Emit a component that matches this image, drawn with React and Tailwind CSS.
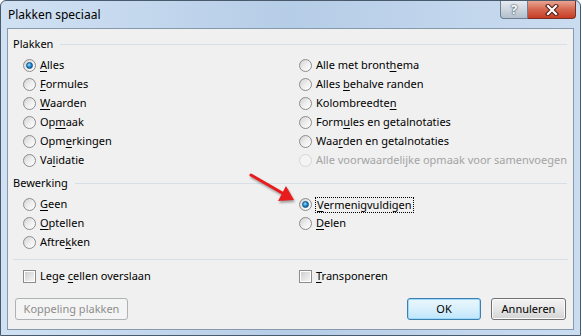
import React from 'react';

const font = { fontFamily: '"Noto Sans", "Liberation Sans", sans-serif' };

const Label = ({ parts, disabled }) => {
  // parts: [before, key, after]
  const [a, k, b] = parts;
  return (
    <span className={disabled ? 'whitespace-nowrap text-[#a3a3a3]' : 'whitespace-nowrap text-black'}>
      {a}
      {k && !disabled ? <span className="underline decoration-1 underline-offset-[2px]">{k}</span> : k}
      {b}
    </span>
  );
};

const Radio = ({ checked, disabled }) => (
  <span
    className={
      disabled
        ? 'flex h-[13px] w-[13px] shrink-0 items-center justify-center rounded-full border border-[#d6d6d6] bg-[#f4f4f4]'
        : 'flex h-[13px] w-[13px] shrink-0 items-center justify-center rounded-full border border-[#8c8c8c] bg-gradient-to-br from-[#d2d2d2] via-[#eeeeee] to-[#ffffff]'
    }
  >
    {checked && (
      <span className="h-[7px] w-[7px] rounded-full border border-[#0b4f86] bg-[radial-gradient(circle_at_40%_35%,#9be0ff,#2a8fd0_45%,#0b5a98_90%)]" />
    )}
  </span>
);

const Check = () => (
  <span className="flex h-[13px] w-[13px] shrink-0 items-center justify-center border border-[#8c8c8c] bg-white">
    <span className="h-[9px] w-[9px] bg-gradient-to-br from-[#cfcfcf] to-[#f6f6f6]" />
  </span>
);

const Option = ({ parts, checked, disabled, focus }) => (
  <div className="flex h-[19px] items-center gap-[4px]">
    <Radio checked={checked} disabled={disabled} />
    {focus ? (
      <span className="-ml-px border border-dotted border-black px-px leading-[14px]">
        <Label parts={parts} />
      </span>
    ) : (
      <Label parts={parts} disabled={disabled} />
    )}
  </div>
);

const GroupTitle = ({ children }) => (
  <div className="flex h-[19px] items-center gap-[7px] pl-[5px] pr-[6px]">
    <span className="text-black">{children}</span>
    <div className="h-px flex-1 bg-[#d5dfe5]" />
  </div>
);

const pasteLeft = [
  { parts: ['', 'A', 'lles'], checked: true },
  { parts: ['', 'F', 'ormules'] },
  { parts: ['', 'W', 'aarden'] },
  { parts: ['Op', 'm', 'aak'] },
  { parts: ['Opm', 'e', 'rkingen'] },
  { parts: ['Va', 'l', 'idatie'] },
];

const pasteRight = [
  { parts: ['Alle met bront', 'h', 'ema'] },
  { parts: ['Alles ', 'b', 'ehalve randen'] },
  { parts: ['Kolombreedte', 'n', ''] },
  { parts: ['Form', 'u', 'les en getalnotaties'] },
  { parts: ['Waa', 'r', 'den en getalnotaties'] },
  { parts: ['Alle voorwaardelijke opmaak voor samenvoegen', '', ''], disabled: true },
];

const opLeft = [
  { parts: ['', 'G', 'een'] },
  { parts: ['', 'O', 'ptellen'] },
  { parts: ['Aftre', 'k', 'ken'] },
];

const opRight = [
  { parts: ['', 'V', 'ermenigvuldigen'], checked: true, focus: true },
  { parts: ['', 'D', 'elen'] },
];

export default function App() {
  return (
    <div className="relative h-[336px] w-[582px] bg-white text-[11px]" style={font}>
      <div className="flex h-[336px] w-[581px] flex-col rounded-t-[6px] border border-[#4a5a6d] bg-gradient-to-r from-[#d0e1f3] via-[#b6cde7] to-[#cadcf0]">
        {/* title bar */}
        <div className="flex h-[27px] items-start justify-between">
          <span className="pl-[7px] pt-[6px] text-[12px] leading-[16px] text-black">Plakken speciaal</span>
          <div className="mr-[4px] flex">
            <div className="flex h-[18px] w-[28px] items-center justify-center rounded-bl-[4px] border border-t-0 border-[#6e7f92] bg-gradient-to-b from-[#e6ebf1] via-[#cdd5df] to-[#b2bfcd]">
              <span className="text-[13px] font-bold leading-none text-white [text-shadow:0_0_2px_#2c3a4a,0_0_1px_#2c3a4a]">?</span>
            </div>
            <div className="flex h-[18px] w-[48px] items-center justify-center rounded-br-[4px] border border-l-0 border-t-0 border-[#7a2f22] bg-gradient-to-b from-[#e9a493] via-[#d56750] to-[#c63c22]">
              <svg width="14" height="12" viewBox="0 0 14 12">
                <path d="M3 2 L11 10 M11 2 L3 10" stroke="#4a1d14" strokeWidth="4.2" strokeLinecap="square" />
                <path d="M3 2 L11 10 M11 2 L3 10" stroke="#ffffff" strokeWidth="2.2" strokeLinecap="square" />
              </svg>
            </div>
          </div>
        </div>

        {/* client area */}
        <div className="mx-[6px] flex h-[302px] flex-col border border-[#8799ad] bg-[#f0f0f0] pt-[6px]">
          <GroupTitle>Plakken</GroupTitle>
          <div className="mt-[2px] grid grid-cols-[276px_1fr] pl-[15px]">
            <div className="flex flex-col">
              {pasteLeft.map((o, i) => (
                <Option key={i} {...o} />
              ))}
            </div>
            <div className="flex flex-col">
              {pasteRight.map((o, i) => (
                <Option key={i} {...o} />
              ))}
            </div>
          </div>

          <div className="mt-[4px]">
            <GroupTitle>Bewerking</GroupTitle>
          </div>
          <div className="mt-[2px] grid grid-cols-[276px_1fr] pl-[15px]">
            <div className="flex flex-col">
              {opLeft.map((o, i) => (
                <Option key={i} {...o} />
              ))}
            </div>
            <div className="flex flex-col">
              {opRight.map((o, i) => (
                <Option key={i} {...o} />
              ))}
            </div>
          </div>

          <div className="mx-[5px] mt-[7px] h-px bg-[#d5dfe5]" />

          <div className="mt-[7px] grid grid-cols-[276px_1fr] pl-[15px]">
            <div className="flex h-[19px] items-center gap-[4px]">
              <Check />
              <Label parts={['Lege ', 'c', 'ellen overslaan']} />
            </div>
            <div className="flex h-[19px] items-center gap-[4px]">
              <Check />
              <Label parts={['', 'T', 'ransponeren']} />
            </div>
          </div>

          <div className="mt-[12px] flex items-center justify-between px-[7px]">
            <button className="h-[22px] w-[113px] rounded-[3px] border border-[#adb2b5] bg-[#f4f4f4] text-[#8d8d8d]">
              Koppeling plakken
            </button>
            <div className="flex gap-[10px]">
              <button className="h-[22px] w-[74px] rounded-[3px] border border-[#3c7fb1] bg-gradient-to-b from-[#eaf6fd] via-[#d9f0fc] to-[#bee6fd] text-black shadow-[inset_0_0_0_1px_#9fd9f8]">
                OK
              </button>
              <button className="h-[22px] w-[75px] rounded-[3px] border border-[#707070] bg-gradient-to-b from-[#f2f2f2] via-[#e6e6e6] to-[#d4d4d4] text-black shadow-[inset_0_0_0_1px_#fbfbfb]">
                Annuleren
              </button>
            </div>
          </div>
        </div>
      </div>

      {/* red annotation arrow */}
      <svg
        className="pointer-events-none absolute left-[244px] top-[167px] drop-shadow-[1px_2px_1px_rgba(0,0,0,0.35)]"
        width="56"
        height="40"
        viewBox="0 0 56 40"
      >
        <path d="M7 8 L40 27" stroke="#e81c1c" strokeWidth="3" strokeLinecap="round" />
        <path d="M50 33 L34 34 L42 19 Z" fill="#e81c1c" />
      </svg>
    </div>
  );
}
